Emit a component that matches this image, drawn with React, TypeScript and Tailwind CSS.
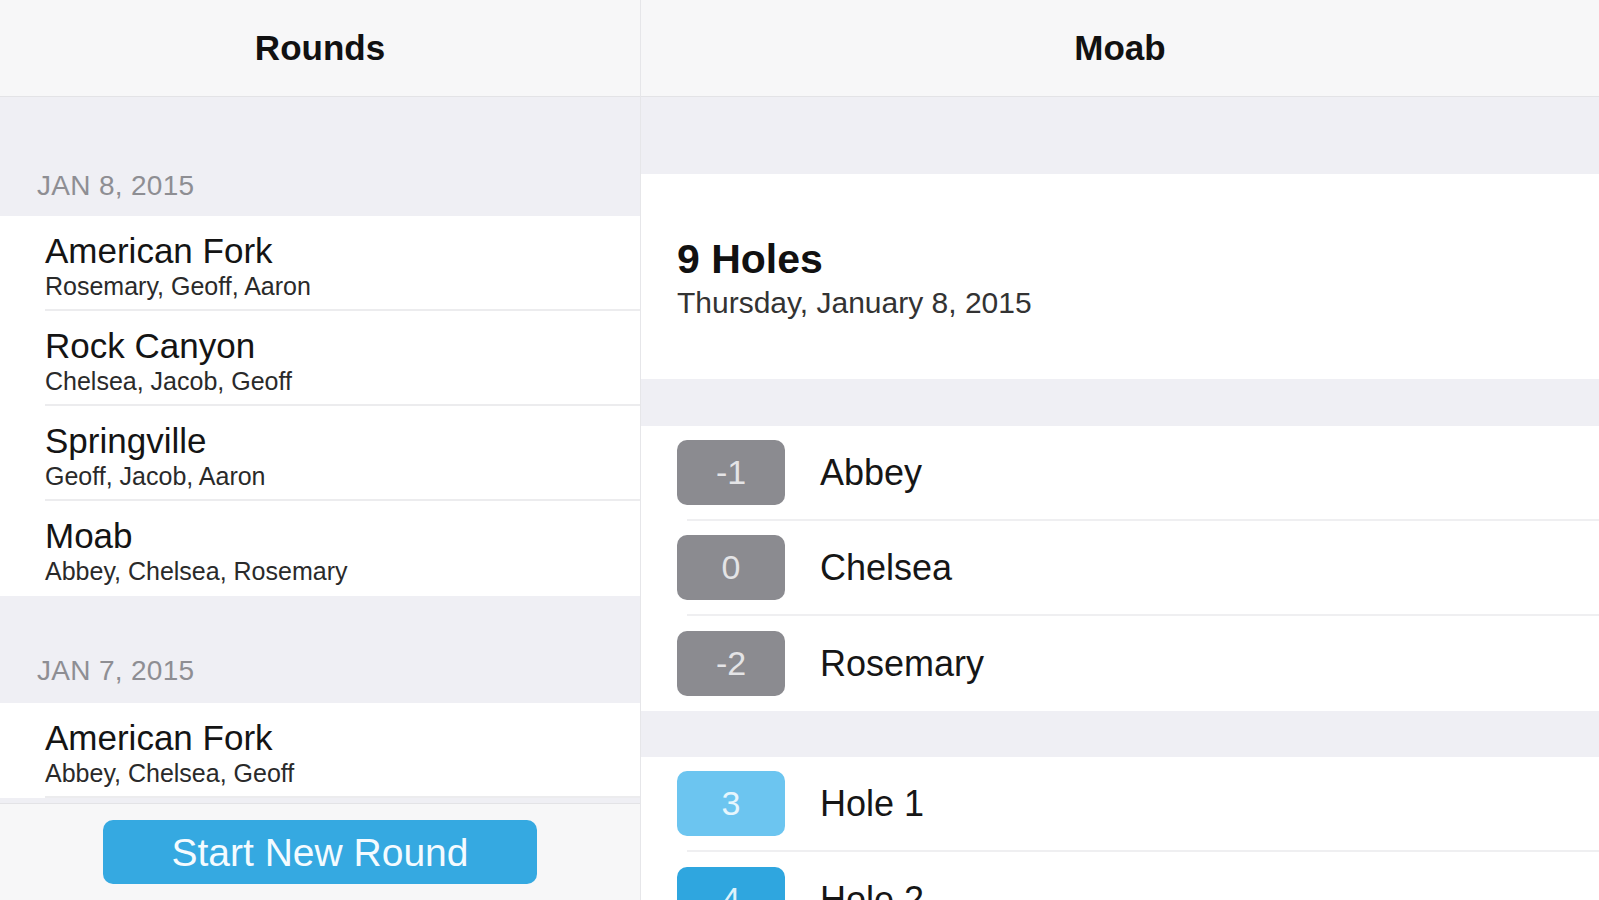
import React from 'react';

const FONT = { fontFamily: '"Liberation Sans", Arial, sans-serif' };

type Round = { course: string; players: string };

const sections: { date: string; first: boolean; rounds: Round[] }[] = [
  {
    date: 'JAN 8, 2015',
    first: true,
    rounds: [
      { course: 'American Fork', players: 'Rosemary, Geoff, Aaron' },
      { course: 'Rock Canyon', players: 'Chelsea, Jacob, Geoff' },
      { course: 'Springville', players: 'Geoff, Jacob, Aaron' },
      { course: 'Moab', players: 'Abbey, Chelsea, Rosemary' },
    ],
  },
  {
    date: 'JAN 7, 2015',
    first: false,
    rounds: [{ course: 'American Fork', players: 'Abbey, Chelsea, Geoff' }],
  },
];

const players = [
  { score: '-1', name: 'Abbey' },
  { score: '0', name: 'Chelsea' },
  { score: '-2', name: 'Rosemary' },
];

const holes = [
  { par: '3', name: 'Hole 1', light: true },
  { par: '4', name: 'Hole 2', light: false },
];

function NavBar({ title }: { title: string }) {
  return (
    <div className="h-[97px] shrink-0 flex items-center justify-center bg-[#f7f7f8] border-b border-[#e3e3e6]">
      <span className="text-[35px] font-bold text-[#111]">{title}</span>
    </div>
  );
}

function RoundsList() {
  return (
    <div className="w-[641px] shrink-0 flex flex-col border-r border-[#e6e6e9] bg-[#efeff4]">
      <NavBar title="Rounds" />
      <div className="flex-1 min-h-0 overflow-hidden">
        {sections.map((s) => (
          <div key={s.date}>
            <div className={`${s.first ? 'h-[119px] pb-[15px]' : 'h-[107px] pb-[17px]'} flex items-end px-[37px]`}>
              <span className="text-[28px] leading-[30px] tracking-[0.3px] text-[#8e8e93]">{s.date}</span>
            </div>
            <div className="bg-white">
              {s.rounds.map((r, i) => (
                <div key={r.course + i} className="h-[95px] pl-[45px] flex flex-col">
                  <div className="pt-[15px] text-[35px] leading-[40px] text-[#141414]">{r.course}</div>
                  <div className="mt-[1px] text-[25px] leading-[28px] text-[#2a2a2a]">{r.players}</div>
                  {(i < s.rounds.length - 1 || s.rounds.length === 1) && (
                    <div className="mt-auto h-[2px] bg-[#ececee]" />
                  )}
                </div>
              ))}
            </div>
          </div>
        ))}
      </div>
      <div className="h-[97px] shrink-0 flex items-center justify-center bg-[#f7f7f8] border-t border-[#e3e3e6]">
        <button
          type="button"
          className="w-[434px] h-[64px] rounded-[10px] bg-[#35a9e1] text-[#f4fbff] text-[39px] leading-none"
        >
          Start New Round
        </button>
      </div>
    </div>
  );
}

function Badge({ value, tone }: { value: string; tone: 'gray' | 'light' | 'blue' }) {
  const cls =
    tone === 'gray'
      ? 'bg-[#8b8b90] text-[#e4e4e6]'
      : tone === 'light'
        ? 'bg-[#6cc5f0] text-[#e6f6fd]'
        : 'bg-[#2fa6df] text-[#dff2fb]';
  return (
    <div className={`w-[108px] h-[65px] shrink-0 rounded-[10px] flex items-center justify-center text-[34px] ${cls}`}>
      {value}
    </div>
  );
}

function ScoreRow({ value, tone, label, last }: { value: string; tone: 'gray' | 'light' | 'blue'; label: string; last: boolean }) {
  return (
    <div className="h-[95px] flex flex-col">
      <div className="flex-1 flex items-center pl-[36px] gap-[35px]">
        <Badge value={value} tone={tone} />
        <span className="text-[36px] text-[#161616]">{label}</span>
      </div>
      {!last && <div className="ml-[46px] h-[2px] bg-[#efeff1]" />}
    </div>
  );
}

function RoundDetail() {
  return (
    <div className="flex-1 min-w-0 flex flex-col bg-[#efeff4]">
      <NavBar title="Moab" />
      <div className="flex-1 min-h-0 overflow-hidden">
        <div className="h-[77px]" />
        <div className="h-[205px] bg-white pl-[36px] pt-[62px]">
          <div className="text-[41px] leading-[46px] font-bold text-[#111]">9 Holes</div>
          <div className="mt-[4px] text-[30px] leading-[34px] text-[#333]">Thursday, January 8, 2015</div>
        </div>
        <div className="h-[47px]" />
        <div className="bg-white">
          {players.map((p, i) => (
            <ScoreRow key={p.name} value={p.score} tone="gray" label={p.name} last={i === players.length - 1} />
          ))}
        </div>
        <div className="h-[46px]" />
        <div className="bg-white">
          {holes.map((h, i) => (
            <ScoreRow key={h.name} value={h.par} tone={h.light ? 'light' : 'blue'} label={h.name} last={i === holes.length - 1} />
          ))}
        </div>
      </div>
    </div>
  );
}

export default function App() {
  return (
    <div className="w-[1599px] h-[900px] flex overflow-hidden bg-[#efeff4]" style={FONT}>
      <RoundsList />
      <RoundDetail />
    </div>
  );
}
